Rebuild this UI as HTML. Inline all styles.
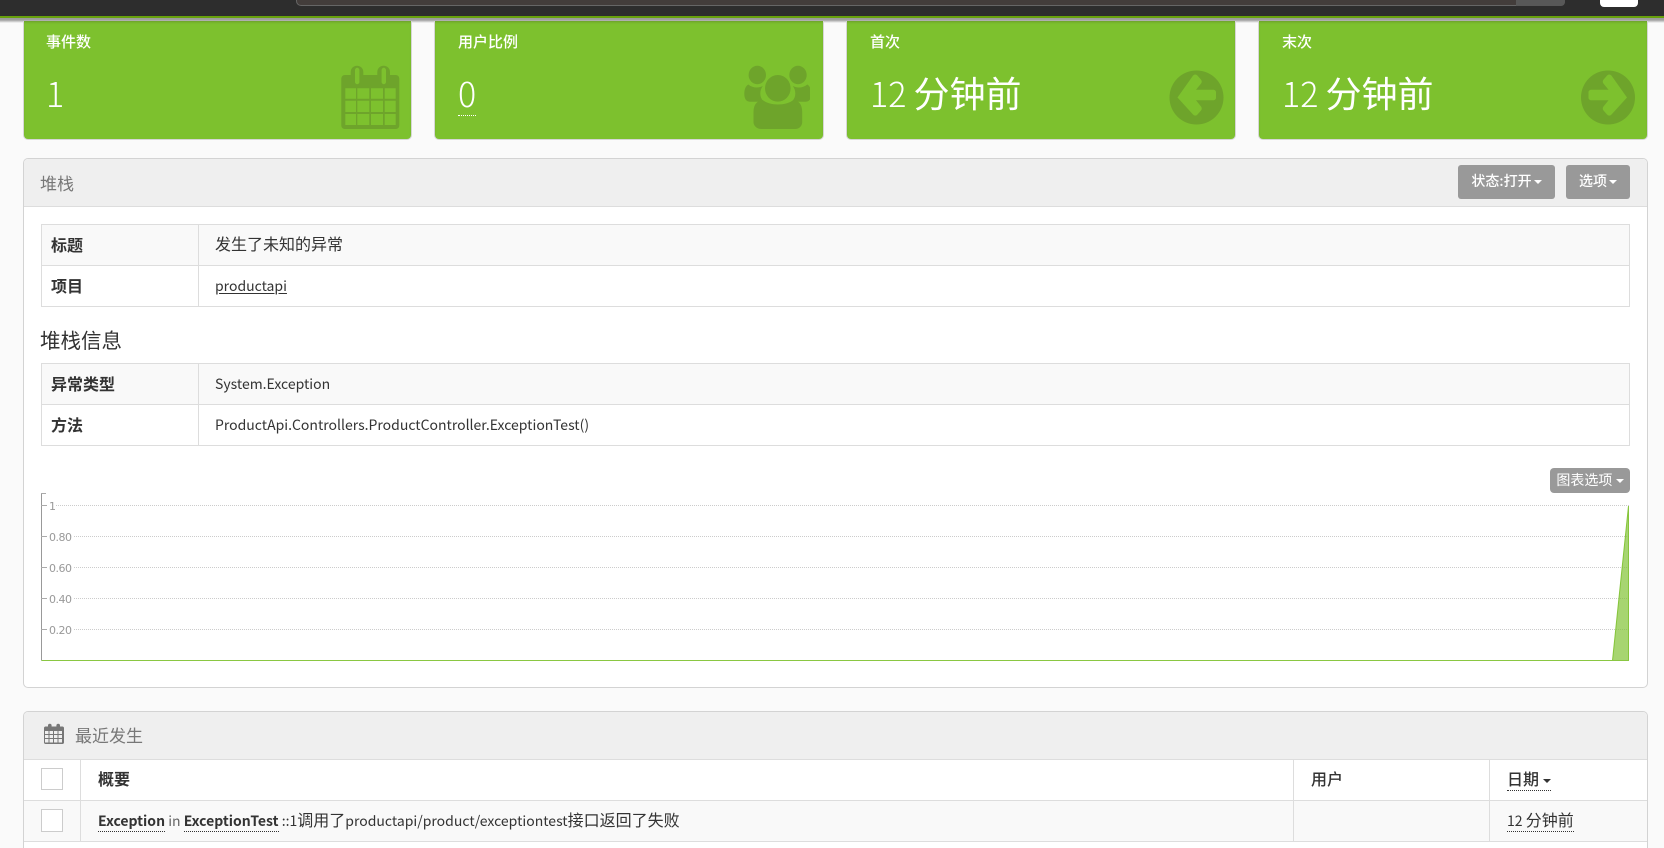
<!DOCTYPE html>
<html lang="zh"><head><meta charset="utf-8"><title>堆栈</title>
<style>
*{box-sizing:border-box}
html,body{margin:0;padding:0;width:1664px;height:848px;overflow:hidden;background:#fafafa}
body{position:relative;font-family:"Noto Sans CJK SC","Liberation Sans",sans-serif;color:#333;font-size:16px}
.a{position:absolute;white-space:nowrap}
.z{font-size:16px}
.bar{left:0;top:0;width:1664px;height:16px;background:#2d2d2d}
.gl{left:0;top:16px;width:1664px;height:2px;background:#67a00c}
.sh{left:0;top:18px;width:1664px;height:5px;background:linear-gradient(#9a9a9a,#a0a0a0 40%,rgba(160,160,160,0))}
.search{left:296px;top:-4px;width:1269px;height:10px;background:#433d3b;border:1px solid #666;border-top:0;border-radius:0 0 5px 5px}
.sb{left:1516px;top:0;width:49px;height:6px;background:#585858;border-radius:0 0 4px 0}
.av{left:1600px;top:0;width:38px;height:7px;background:#fff;border-radius:0 0 4px 4px}
.card{top:21px;height:119px;width:390px;background:#7dc12e;border:1px solid #d6d6d6;border-top:0;border-radius:0 0 5px 5px;box-shadow:inset 0 2px 2px -1px rgba(90,120,40,.5)}
.cl{color:#fff;font-size:15px;line-height:20px;top:32px;font-weight:500}
.cv{color:#fff;font-size:36px;line-height:48px;top:68px;font-weight:400;word-spacing:-1px}
.cv b{font-weight:300;font-size:34px}
.panel{background:#fff;border:1px solid #d3d3d3;border-radius:5px;left:23px;width:1625px;overflow:hidden}
.ph{left:0;top:0;width:1623px;height:48px;background:#efefef;border-bottom:1px solid #ddd}
.pt{font-size:17px;color:#777;line-height:24px}
.btn{background:#999;color:#fff;border-radius:3px;font-size:14px;text-align:center;font-weight:500}
.caret{display:inline-block;width:0;height:0;border:4px solid transparent;border-top-color:#fff;border-bottom:0;vertical-align:middle;margin-left:2px}
table.t{position:absolute;left:41px;width:1589px;border-collapse:collapse;table-layout:fixed;font-size:14px;line-height:20px}
table.t td,table.t th{border:1px solid #ddd;height:41px;padding:0 0 0 16px;text-align:left;vertical-align:middle;overflow:hidden}
table.t td.c{padding-bottom:2px}
table.t th{padding:0 0 2px 9px;font-weight:700;font-size:16px}
table.t col.c1{width:157px}
table.t tr.o{background:#f9f9f9}
u{text-underline-offset:2px}
.h4{left:40px;top:325px;font-size:20.5px;line-height:28px;color:#333}
.ln{background:#ddd}
.cb{background:#fff;border:1px solid #ccc;width:22px;height:22px;left:41px}
.b{font-weight:700}
.dot{border-bottom:1px dotted #333}
</style></head><body>
<div class="a bar"></div><div class="a gl"></div><div class="a sh"></div>
<div class="a search"></div><div class="a sb"></div><div class="a av"></div>

<div class="a card" style="left:23px;width:389px"></div>
<div class="a cl" style="left:46px">事件数</div>
<div class="a cv" style="left:46px"><b>1</b></div>
<svg class="a" style="left:340px;top:64px" width="60" height="66" viewBox="340 64 60 66"><path fill="#6ea42b" fill-rule="evenodd" d="M344.800 75H350.700V72a6.300 6.300 0 0 1 12.600 0V75H377.300V72a6.350 6.300 0 0 1 12.700 0V75H395.800a3.500 3.500 0 0 1 3.500 3.500V125.500a3.500 3.500 0 0 1-3.500 3.500H344.800a3.500 3.500 0 0 1-3.500-3.500V78.500a3.500 3.500 0 0 1 3.500-3.500zM355 70V82a2.200 2.200 0 0 0 4.400 0V70a2.200 2.200 0 0 0-4.400 0zM381.600 70V82a2.200 2.200 0 0 0 4.400 0V70a2.200 2.200 0 0 0-4.400 0zM345.300 88.300H356V98.700H345.300zM357.300 88.300H369.300V98.700H357.300zM371 88.300H383V98.700H371zM384.700 88.300H395.700V98.700H384.700zM345.300 100.700H356V112H345.300zM357.300 100.700H369.300V112H357.300zM371 100.700H383V112H371zM384.700 100.700H395.700V112H384.700zM345.300 114H356V125H345.300zM357.300 114H369.300V125H357.300zM371 114H383V125H371zM384.700 114H395.700V125H384.700z"/></svg>

<div class="a card" style="left:434px"></div>
<div class="a cl" style="left:458px">用户比例</div>
<div class="a cv" style="left:458px"><b>0</b></div>
<div class="a" style="left:458px;top:115px;width:18px;border-top:1px dotted #fff"></div>
<svg class="a" style="left:740px;top:64px" width="70" height="68" viewBox="740 64 70 68"><g fill="#6ea42b"><ellipse cx="777.800" cy="88.300" rx="12.800" ry="13.300"/><path d="M753.500 112c0-7 3-11 9-12c4 3 9.500 4.500 15.500 4.500s11.500-1.500 15.500-4.500c6 1 8.700 5 8.700 12v10c0 4-3 7-7 7h-34c-4 0-7.700-3-7.700-7z"/><ellipse cx="757.300" cy="75" rx="8.700" ry="9.200"/><ellipse cx="798" cy="75" rx="8.700" ry="9.200"/><path d="M744.300 94c0-5 1.500-8 4-9.500c2.500 2 5.500 3 8.500 3c2 0 4-.5 6-1.500c-1.500 2-2.500 4.500-2.500 7.500c0 3 1 5.500 3 7.500c-2 1.200-4 .7-6.500 .7h-7c-3.500 0-5.500-3-5.500-7.700z"/><path transform="matrix(-1 0 0 1 1555.600 0)" d="M744.300 94c0-5 1.500-8 4-9.500c2.500 2 5.500 3 8.500 3c2 0 4-.5 6-1.500c-1.500 2-2.500 4.500-2.500 7.500c0 3 1 5.500 3 7.500c-2 1.200-4 .7-6.500 .7h-7c-3.500 0-5.500-3-5.500-7.700z"/></g></svg>

<div class="a card" style="left:846px"></div>
<div class="a cl" style="left:870px">首次</div>
<div class="a cv" style="left:870px"><b>12</b> 分钟前</div>
<svg class="a" style="left:1169px;top:70px" width="56" height="56" viewBox="1169 70 56 56"><path fill="#6ea42b" fill-rule="evenodd" d="M1196.500 70.500a27 27 0 1 1 0 54a27 27 0 0 1 0-54zM1177.500 97.500l15.500 17c1.500 1.500 3 1.500 4.500 0l3.500-4c1-1.200 1-2.800 0-4l-5-6.200h17.500c1.300 0 2.500-1.200 2.500-2.500v-5.500c0-1.300-1.200-2.500-2.500-2.500h-17.500l5-6.200c1-1.200 1-2.800 0-4l-3.500-4c-1.500-1.500-3-1.500-4.500 0z"/></svg>

<div class="a card" style="left:1258px"></div>
<div class="a cl" style="left:1282px">末次</div>
<div class="a cv" style="left:1282px"><b>12</b> 分钟前</div>
<svg class="a" style="left:1580px;top:70px" width="56" height="56" viewBox="1580 70 56 56"><path fill="#6ea42b" fill-rule="evenodd" d="M1608 70.500a27 27 0 1 0 0 54a27 27 0 0 0 0-54zM1627 97.500l-15.500 17c-1.500 1.500-3 1.500-4.500 0l-3.500-4c-1-1.200-1-2.800 0-4l5-6.200h-17.500c-1.300 0-2.500-1.200-2.500-2.500v-5.500c0-1.300 1.200-2.500 2.500-2.500h17.500l-5-6.200c-1-1.200-1-2.800 0-4l3.500-4c1.500-1.500 3-1.500 4.500 0z"/></svg>

<div class="a panel" style="top:158px;height:530px"><div class="a ph"></div></div>
<div class="a pt" style="left:40px;top:171px">堆栈</div>
<div class="a btn" style="left:1458px;top:165px;width:97px;height:34px;line-height:33px">状态:打开<span class="caret"></span></div>
<div class="a btn" style="left:1566px;top:165px;width:64px;height:34px;line-height:33px">选项<span class="caret"></span></div>

<table class="t" style="top:224px"><colgroup><col class="c1"><col></colgroup>
<tr class="o"><th>标题</th><td class="c"><span class="z">发生了未知的异常</span></td></tr>
<tr><th>项目</th><td><u>productapi</u></td></tr></table>
<div class="a h4">堆栈信息</div>
<table class="t" style="top:363px"><colgroup><col class="c1"><col></colgroup>
<tr class="o"><th>异常类型</th><td>System.Exception</td></tr>
<tr><th>方法</th><td>ProductApi.Controllers.ProductController.ExceptionTest()</td></tr></table>

<div class="a btn" style="left:1550px;top:468px;width:80px;height:25px;line-height:25px;border-radius:4px;font-weight:400">图表选项 <span class="caret" style="margin-left:0"></span></div>

<svg class="a" style="left:0;top:480px" width="1664" height="200" viewBox="0 480 1664 200">
<g stroke="#ccc" stroke-dasharray="1 1" stroke-width="1" fill="none">
<path d="M42 505.500H1629M42 536.500H1629M42 567.500H1629M42 598.500H1629M42 629.500H1629"/></g>
<path d="M41.500 493V660.500" stroke="#999" fill="none"/>
<path d="M41 493.500h5M41 505.500h6M41 536.500h6M41 567.500h6M41 598.500h6M41 629.500h6" stroke="#aaa" fill="none"/>
<g font-family="DejaVu Sans,sans-serif" font-size="11" fill="#999">
<rect x="48" y="498" width="8" height="15" fill="#fff"/><rect x="48" y="529" width="25" height="15" fill="#fff"/><rect x="48" y="560" width="25" height="15" fill="#fff"/><rect x="48" y="591" width="25" height="15" fill="#fff"/><rect x="48" y="622" width="25" height="15" fill="#fff"/>
<text x="49" y="510">1</text><text x="49" y="541" textLength="23">0.80</text><text x="49" y="572" textLength="23">0.60</text><text x="49" y="603" textLength="23">0.40</text><text x="49" y="634" textLength="23">0.20</text></g>
<path d="M1612.500 660L1628.500 506V660Z" fill="#7dc12e" fill-opacity=".68"/>
<path d="M41.500 660.500H1612.500L1628.500 506V660.500H1612.500" stroke="#7dc12e" stroke-opacity=".9" fill="none"/>
</svg>

<div class="a panel" style="top:711px;height:150px"><div class="a ph"></div></div>
<svg class="a" style="left:44px;top:723px" width="20" height="21" viewBox="0 0 20 21"><path fill="#777" fill-rule="evenodd" d="M1.500 3.500H4V2.500a1.800 1.800 0 0 1 3.600 0v1h4.800v-1a1.800 1.800 0 0 1 3.600 0v1h2.500c.8 0 1.500.7 1.500 1.500v14.500c0 .8-.7 1.500-1.500 1.500h-17c-.8 0-1.500-.7-1.500-1.500V5c0-.8.700-1.500 1.500-1.500zM1 8v3h3.500V8zM5.500 8v3H9V8zM10 8v3h3.500V8zM14.500 8v3H18V8zM1 12v3h3.500v-3zM5.500 12v3H9v-3zM10 12v3h3.500v-3zM14.500 12v3H18v-3zM1 16v3.500h3.500V16zM5.500 16v3.500H9V16zM10 16v3.500h3.500V16zM14.500 16v3.500H18V16z"/></svg>
<div class="a pt" style="left:75px;top:723px">最近发生</div>

<div class="a ln" style="left:24px;top:800px;width:1623px;height:1px"></div>
<div class="a ln" style="left:24px;top:841px;width:1623px;height:1px"></div>
<div class="a" style="left:24px;top:801px;width:1623px;height:40px;background:#f9f9f9"></div>
<div class="a ln" style="left:80px;top:760px;width:1px;height:81px"></div>
<div class="a ln" style="left:1293px;top:760px;width:1px;height:81px"></div>
<div class="a ln" style="left:1489px;top:760px;width:1px;height:81px"></div>
<div class="a cb" style="top:768px"></div>
<div class="a cb" style="top:809px;height:23px"></div>
<div class="a b" style="left:98px;top:766px;line-height:24px;font-size:16px">概要</div>
<div class="a" style="left:98px;top:807px;line-height:24px;font-size:14px"><span class="b dot">Exception</span> <span style="color:#666">in</span> <span class="b dot">ExceptionTest</span> ::1<span class="z">调用了</span>productapi/product/exceptiontest<span class="z">接口返回了失败</span></div>
<div class="a" style="left:1311px;top:766px;line-height:24px;font-size:16px;font-weight:500">用户</div>
<div class="a" style="left:1507px;top:767px;line-height:22px;font-size:16px;font-weight:500"><span class="dot" style="display:inline-block;height:24px">日期 <span class="caret" style="border-top-color:#333;margin-left:0"></span></span></div>
<div class="a dot" style="left:1507px;top:809px;line-height:21px;height:23px;font-size:14px">12 <span class="z">分钟前</span></div>
</body></html>
